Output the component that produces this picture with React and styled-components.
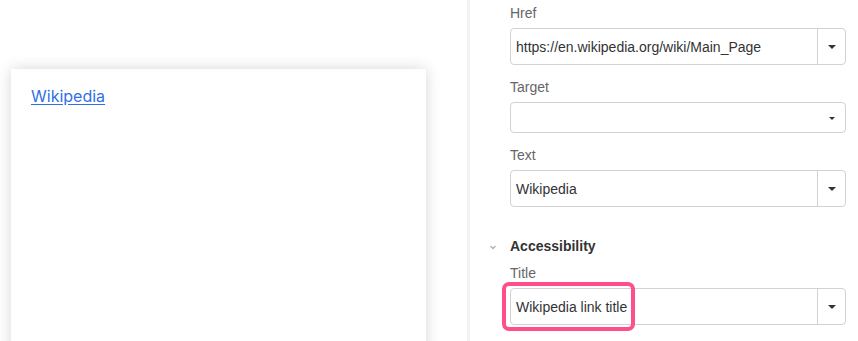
import styled, { createGlobalStyle } from 'styled-components';

const GlobalStyle = createGlobalStyle`
  html, body {
    margin: 0;
    padding: 0;
    background: #fff;
    overflow: hidden;
  }
  body {
    font-family: "Liberation Sans", Arial, sans-serif;
  }
`;

const Layout = styled.div`
  display: grid;
  grid-template-columns: 467px 3px 1fr;
  height: 341px;
  overflow: hidden;
`;

const Canvas = styled.div`
  padding: 69px 41px 0 11px;
  overflow: hidden;
`;

const Card = styled.div`
  background: #fff;
  height: 300px;
  padding: 15px 20px;
  box-sizing: border-box;
  box-shadow: 0 0 14px rgba(0, 0, 0, 0.16);
`;

const Link = styled.a`
  font-family: Inter, "Noto Sans", sans-serif;
  font-size: 16px;
  line-height: 24px;
  color: #2f6fe8;
  text-decoration: underline;
  text-underline-offset: 2px;
`;

const Divider = styled.div`
  background: #f2f2f2;
`;

const Panel = styled.div`
  padding: 5px 12px 0 40px;
  overflow: hidden;
`;

const Field = styled.div`
  position: relative;
  margin-bottom: 14px;
`;

const Label = styled.div`
  font-size: 14px;
  line-height: 17px;
  color: #666;
  margin-bottom: 6px;
`;

const Box = styled.div`
  display: flex;
  align-items: stretch;
  height: ${(p) => p.$height}px;
  box-sizing: border-box;
  border: 1px solid #d2d2d2;
  border-radius: 4px;
  background: #fff;
`;

const Value = styled.div`
  flex: 1;
  display: flex;
  align-items: center;
  padding-left: 5px;
  font-size: 14px;
  color: #333;
`;

const Toggle = styled.div`
  width: 27px;
  display: flex;
  align-items: center;
  justify-content: center;
  border-left: ${(p) => (p.$split ? '1px solid #d2d2d2' : 'none')};
`;

const Caret = styled.div`
  width: 0;
  height: 0;
  border-left: ${(p) => p.$size}px solid transparent;
  border-right: ${(p) => p.$size}px solid transparent;
  border-top: ${(p) => p.$size}px solid #333;
  margin-top: 1px;
`;

const Section = styled.div`
  display: flex;
  align-items: center;
  margin: 31px 0 10px -22px;
  font-size: 14px;
  line-height: 17px;
  font-weight: bold;
  color: #333;
`;

const Chevron = styled.svg`
  width: 10px;
  height: 10px;
  margin-right: 12px;
`;

const Highlight = styled.div`
  position: absolute;
  left: -8px;
  top: 17px;
  width: 133px;
  height: 49px;
  box-sizing: border-box;
  border: 4px solid #ff4f8b;
  border-radius: 7px;
  pointer-events: none;
`;

function Input({ label, value, height = 37, split = true, caret = 4.5, children }) {
  return (
    <Field>
      <Label>{label}</Label>
      <Box $height={height}>
        <Value>{value}</Value>
        <Toggle $split={split}>
          <Caret $size={caret} />
        </Toggle>
      </Box>
      {children}
    </Field>
  );
}

export default function App() {
  return (
    <>
      <GlobalStyle />
      <Layout>
        <Canvas>
          <Card>
            <Link href="#">Wikipedia</Link>
          </Card>
        </Canvas>
        <Divider />
        <Panel>
          <Input label="Href" value="https://en.wikipedia.org/wiki/Main_Page" />
          <Input label="Target" value="" height={31} split={false} caret={3.5} />
          <Input label="Text" value="Wikipedia" />
          <Section>
            <Chevron viewBox="0 0 10 10">
              <path d="M2.5 4 L5 6.5 L7.5 4" fill="none" stroke="#b0b0b0" strokeWidth="1.3" />
            </Chevron>
            Accessibility
          </Section>
          <Input label="Title" value="Wikipedia link title">
            <Highlight />
          </Input>
        </Panel>
      </Layout>
    </>
  );
}
